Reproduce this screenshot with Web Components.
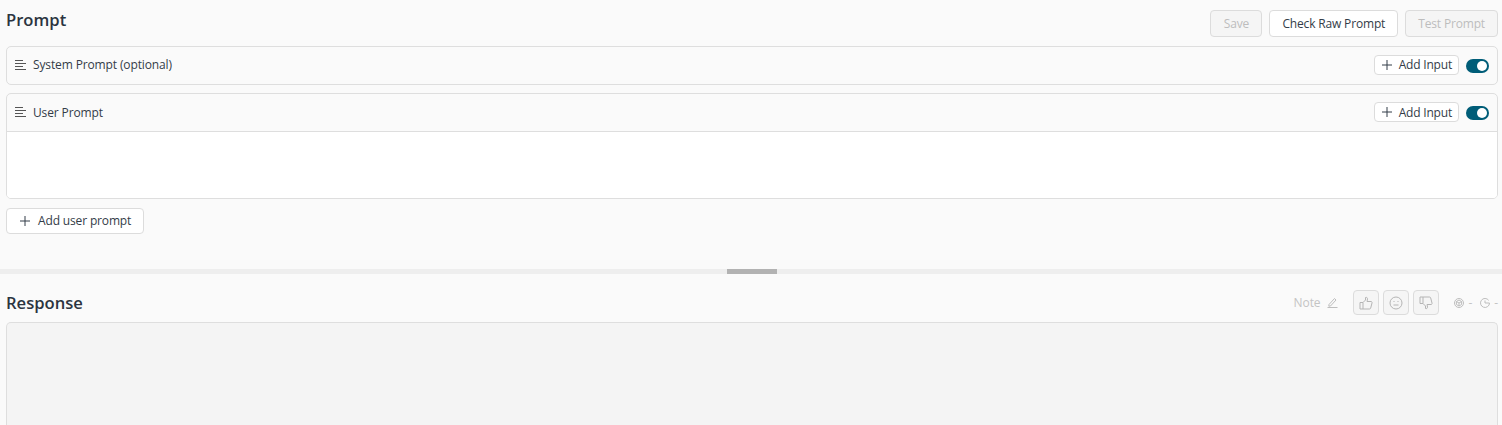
<!DOCTYPE html>
<html><head><meta charset="utf-8">
<style>
html,body{margin:0;padding:0;height:425px;overflow:hidden;background:#fafafa;font-family:"Open Sans","Noto Sans",sans-serif;color:#2b3440}
</style></head><body>
<template id="t-btn"><style>
:host{display:inline-flex;box-sizing:border-box;align-items:center;justify-content:center;height:27px;padding:0 12px;min-width:52px;border:1px solid #dcdcdc;border-radius:4px;background:#fff;font-size:12px;letter-spacing:-.16px;color:#333c48;white-space:nowrap}
:host([disabled]){background:#f5f5f5;color:#bdbdbd}
:host([small]){height:20px;padding:0 6px 1px 6px;gap:6px;letter-spacing:-.2px}
:host([add]){height:26px;padding:0 12px 1px;gap:7px;letter-spacing:-.15px}
svg{width:12px;height:12px;flex:none}
</style><svg viewBox="0 0 12 12" part="plus"><path d="M6 1v10M1 6h10" stroke="#333c48" stroke-width="1" fill="none"/></svg><slot></slot></template>

<template id="t-toggle"><style>
:host{display:block;width:23px;height:14px;border-radius:7px;background:#005d78;position:relative;margin-top:2px}
i{position:absolute;right:2px;top:2px;width:10px;height:10px;border-radius:50%;background:#fff}
</style><i></i></template>

<template id="t-card"><style>
:host{display:block;box-sizing:border-box;border:1px solid #dedede;border-radius:5px;background:#fafafa;overflow:hidden}
header{display:flex;align-items:center;height:37px;box-sizing:border-box;padding:0 8px 1px 8px;font-size:12px;letter-spacing:-.13px;color:#333c48}
svg{width:11px;height:10px;margin-right:7px;flex:none}
.t{flex:1;padding-bottom:2px}
.r{display:flex;align-items:center;gap:7px}
:host([open]) header{border-bottom:1px solid #dedede;height:38px}
:host([open]) .t{padding-bottom:0}
:host([open]) x-btn{padding-bottom:0}
.b{display:none;height:66px;background:#fff}
:host([open]) .b{display:block}
</style><header><svg viewBox="0 0 11 10"><path d="M0 .5h8M0 3.500h11M0 6.500h8M0 9.500h11" stroke="#555" stroke-width="1" fill="none"/></svg><span class="t"><slot></slot></span><span class="r"><x-btn small icon>Add Input</x-btn><x-toggle></x-toggle></span></header><div class="b"></div></template>

<template id="t-title"><style>
:host{display:block;font-size:16.600px;font-weight:600;line-height:22px;color:#2b3440}
</style><slot></slot></template>

<template id="t-split"><style>
:host{display:flex;justify-content:center;height:5px;background:#eeeeee;padding-left:2px}
i{display:block;width:50px;height:5px;background:#b2b2b2}
</style><i></i></template>

<template id="t-prompt"><style>
:host{display:flex;flex-direction:column;box-sizing:border-box;height:269px;padding:10px 4px 0 6px}
.top{display:flex;justify-content:space-between;align-items:flex-start;height:36px}
.top x-title{margin-top:-1px}
.acts{display:flex;gap:7px}
.stack{display:flex;flex-direction:column;gap:8px}
.add{margin-top:9px;align-self:flex-start}
</style><div class="top"><x-title>Prompt</x-title><div class="acts"><x-btn disabled>Save</x-btn><x-btn>Check Raw Prompt</x-btn><x-btn disabled>Test Prompt</x-btn></div></div>
<div class="stack"><x-card>System Prompt (optional)</x-card><x-card open>User Prompt</x-card></div>
<x-btn class="add" add icon>Add user prompt</x-btn></template>

<template id="t-response"><style>
:host{display:flex;flex-direction:column;box-sizing:border-box;flex:1;padding:0 4px 0 6px;min-height:0}
.top{display:flex;justify-content:space-between;align-items:center;height:48px;padding-top:9px;box-sizing:border-box}
.tools{display:flex;align-items:center;font-size:12px;letter-spacing:-.1px;color:#c4c4c4}
.note{display:flex;align-items:center;gap:7px;margin-right:15px}
.fb{display:flex;gap:4px;margin-right:15px}
.m{display:flex;align-items:center;gap:4px;margin-right:8px}
.m:last-child{margin-right:0}
.ico{width:10px;height:10px;fill:none;stroke:#bdbdbd;stroke-width:1}
.box{flex:1;border:1px solid #dedede;border-bottom:0;border-radius:5px 5px 0 0;background:#f4f4f4}
.fbi{display:flex;align-items:center;justify-content:center;box-sizing:border-box;width:26px;height:25px;border:1px solid #dcdcdc;border-radius:4px;background:#f5f5f5}
.fbi svg{width:14px;height:14px;fill:none;stroke:#b5b5b5;stroke-width:1}
</style><div class="top"><x-title>Response</x-title><div class="tools">
<span class="note">Note <svg class="ico" style="width:11px;height:11px" viewBox="0 0 11 11"><path d="M2 7.500 7.500 1.500 9 3 3.500 9 1.800 9.200ZM.5 10.500h10"/></svg></span>
<div class="fb">
<span class="fbi"><svg viewBox="0 0 14 14"><path d="M1 6.500h3v6.500H1zM4 6.500 6.500 4V1.500c1.500-.5 2 .5 2 1.500L8 5.500h4c1 0 1.200.8 1 1.500l-1.300 5c-.2.700-.7 1-1.200 1H4"/></svg></span>
<span class="fbi"><svg viewBox="0 0 14 14"><circle cx="7" cy="7" r="6"/><path d="M4.500 5.500h1M8.500 5.500h1M4.500 9h5"/></svg></span>
<span class="fbi"><svg viewBox="0 0 14 14"><path d="M1 1h3v6.500H1zM4 7.500 6.500 10v2.500c1.500.5 2-.5 2-1.500L8 8.500h4c1 0 1.200-.8 1-1.500L11.700 2c-.2-.7-.7-1-1.200-1H4"/></svg></span>
</div>
<span class="m"><svg class="ico" viewBox="0 0 10 10"><circle cx="5" cy="5" r="4.500"/><path d="M5 2 7.600 3.500v3L5 8 2.400 6.500v-3ZM2.400 3.500 5 5l2.600-1.500M5 5v3"/></svg>-</span>
<span class="m"><svg class="ico" viewBox="0 0 10 10"><path d="M8.700 2.400A4.500 4.500 0 1 0 9.500 5H5V2.500"/></svg>-</span>
</div></div><div class="box"></div></template>

<template id="t-app"><style>
:host{display:flex;flex-direction:column;height:425px;overflow:hidden}
</style><x-prompt></x-prompt><x-split></x-split><x-response></x-response></template>

<x-app></x-app>
<script>
const reg=(n,id)=>customElements.define(n,class extends HTMLElement{constructor(){super();this.attachShadow({mode:'open'}).appendChild(document.getElementById(id).content.cloneNode(true));}connectedCallback(){if(n==='x-btn'&&!this.hasAttribute('icon')){const s=this.shadowRoot.querySelector('svg');if(s)s.remove();}}});
[['x-btn','t-btn'],['x-toggle','t-toggle'],['x-card','t-card'],['x-title','t-title'],['x-split','t-split'],['x-prompt','t-prompt'],['x-response','t-response'],['x-app','t-app']].forEach(a=>reg(a[0],a[1]));
</script>
</body></html>
